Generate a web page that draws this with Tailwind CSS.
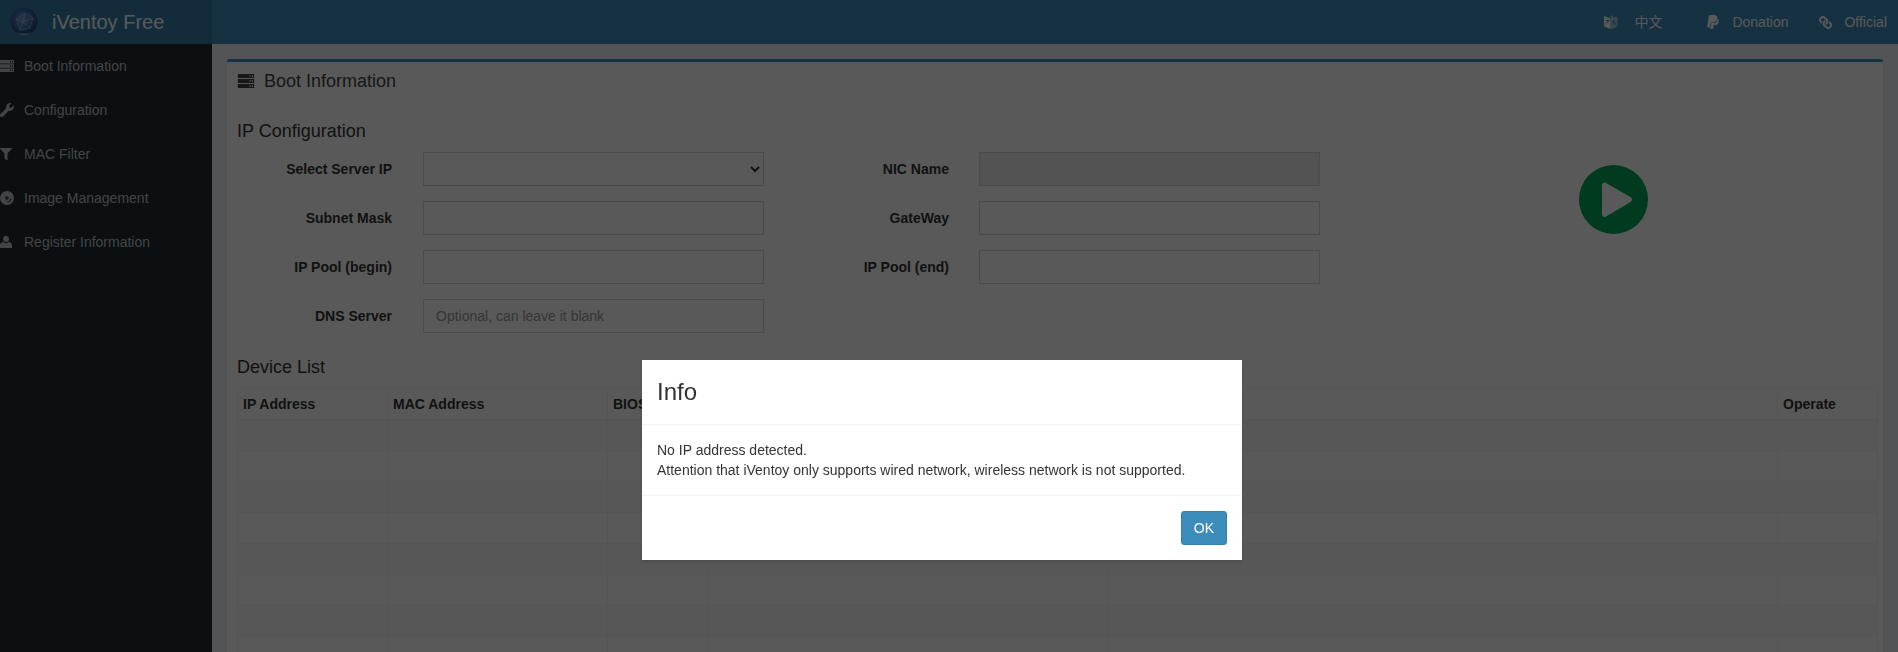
<!DOCTYPE html>
<html lang="en">
<head>
  <meta charset="UTF-8" />
  <title>iVentoy Free</title>
  <script src="https://cdn.jsdelivr.net/npm/@tailwindcss/browser@4"></script>
</head>
<body class="h-screen overflow-hidden bg-[#ecf0f5] text-[14px] leading-[20px] text-[#333] font-['Liberation_Sans',Arial,sans-serif]">

<!-- Header -->
<header class="flex h-[44px] bg-[#3c8dbc] text-white">
  <a class="flex w-[212px] items-center bg-[#367fa9] pl-[10px]">
    <svg width="28" height="30" viewBox="0 0 28 30">
      <defs>
        <radialGradient id="globe" cx="0.45" cy="0.42" r="0.6">
          <stop offset="0" stop-color="#6f9fd8" />
          <stop offset="0.65" stop-color="#34609f" />
          <stop offset="1" stop-color="#1d3a70" />
        </radialGradient>
      </defs>
      <circle cx="14" cy="14.500" r="13.500" fill="url(#globe)" />
      <path d="M6 12 15 6 23 11 20 21 10 23ZM15 6 13 15 20 21M6 12 13 15 10 23M23 11 13 15" fill="none" stroke="#b4c6e4" stroke-width="0.5" />
      <path d="M6 25C10 29 18 29 22 25 18 27 10 27 6 25Z" fill="#dbe4f0" opacity="0.7" />
    </svg>
    <span class="ml-[14px] text-[20px]">iVentoy Free</span>
  </a>
  <nav class="ml-auto flex items-center pr-[11px]">
    <a class="flex items-center">
      <svg width="14" height="14" viewBox="0 0 14 14" fill="currentColor"><path d="M0 1 6.500 3.500V14L0 11.500Z" /><path d="M6.500 1.500 9 0V2.500L13.500 1.500V12L7 14V3.500Z" fill-opacity="0.55" /><path d="M1.500 8C3.500 7.500 4.500 6.500 5 5M2 5.500H5.500M8.500 10 10 5.500 11.500 10" fill="none" stroke="#3c8dbc" stroke-width="1" /></svg>
      <span class="ml-[16px] font-['Liberation_Sans','Noto_Sans_CJK_SC',sans-serif]">中文</span>
    </a>
    <a class="ml-[45px] flex items-center">
      <svg width="12" height="14" viewBox="0 28 384 456" fill="currentColor"><path d="M111.4 295.9c-3.5 19.2-17.4 108.7-21.5 134-.3 1.8-1 2.5-3 2.5H12.3c-7.6 0-13.1-6.6-12.1-13.9L58.8 46.6c1.5-9.6 10.1-16.9 20-16.9 152.3 0 165.1-3.7 204 11.4 60.1 23.3 65.6 79.5 44 140.3-21.5 62.6-72.5 89.5-140.1 90.3-43.4.7-69.5-7-75.3 24.2zM357.1 152c-1.8-1.3-2.5-1.8-3 1.3-2 11.4-5.1 22.5-8.8 33.6-39.9 113.8-150.5 103.9-204.5 103.9-6.1 0-10.1 3.3-10.9 9.4-22.6 140.4-27.1 169.7-27.1 169.7-1 7.1 3.5 12.9 10.6 12.9h63.5c8.6 0 15.7-6.3 17.4-14.9.7-5.4-1.1 6.1 14.4-91.3 4.6-22 14.3-19.7 29.3-19.7 71 0 126.4-28.8 142.9-112.3 6.5-34.8 4.6-71.4-23.8-92.6z" /></svg>
      <span class="ml-[13px]">Donation</span>
    </a>
    <a class="ml-[30px] flex items-center">
      <svg width="13" height="13" viewBox="0 0 512 512" fill="currentColor" class="translate-x-[1px] -scale-x-100"><path d="M326.612 185.391c59.747 59.809 58.927 155.698.36 214.59-.11.12-.24.25-.36.37l-67.2 67.2c-59.27 59.27-155.699 59.262-214.96 0-59.27-59.26-59.27-155.7 0-214.96l37.106-37.106c9.84-9.84 26.786-3.3 27.294 10.606.648 17.722 3.826 35.527 9.69 52.721 1.986 5.822.567 12.262-3.783 16.612l-13.087 13.087c-28.026 28.026-28.905 73.66-1.155 101.96 28.024 28.579 74.086 28.749 102.325.51l67.2-67.19c28.191-28.191 28.073-73.757 0-101.83-3.701-3.694-7.429-6.564-10.341-8.569a16.037 16.037 0 0 1-6.947-12.606c-.396-10.567 3.348-21.456 11.698-29.806l21.054-21.055c5.521-5.521 14.182-6.199 20.584-1.731a152.482 152.482 0 0 1 20.522 17.197zM467.547 44.449c-59.261-59.262-155.69-59.27-214.96 0l-67.2 67.2c-.12.12-.25.25-.36.37-58.566 58.892-59.387 154.781.36 214.59a152.454 152.454 0 0 0 20.521 17.196c6.402 4.468 15.064 3.789 20.584-1.731l21.054-21.055c8.35-8.35 12.094-19.239 11.698-29.806a16.037 16.037 0 0 0-6.947-12.606c-2.912-2.005-6.64-4.875-10.341-8.569-28.073-28.073-28.191-73.639 0-101.83l67.2-67.19c28.239-28.239 74.3-28.069 102.325.51 27.75 28.3 26.872 73.934-1.155 101.96l-13.087 13.087c-4.35 4.35-5.769 10.79-3.783 16.612 5.864 17.194 9.042 34.999 9.69 52.721.509 13.906 17.454 20.446 27.294 10.606l37.106-37.106c59.271-59.259 59.271-155.699.001-214.959z" /></svg>
      <span class="ml-[13px]">Official</span>
    </a>
  </nav>
</header>

<div class="flex h-[608px]">
  <!-- Sidebar -->
  <aside class="w-[212px] shrink-0 bg-[#222d32] text-[#b8c7ce]">
    <ul>
      <li class="flex h-[44px] items-center">
        <svg width="14" height="12" viewBox="0 0 14 12" fill="currentColor" class="mr-[10px]"><path fill-rule="evenodd" d="M0 0H14V3.400H0ZM10 1V2.400H11V1ZM12 1V2.400H13V1ZM0 4.300H14V7.700H0ZM10 5.300V6.700H11V5.300ZM12 5.300V6.700H13V5.300ZM0 8.600H14V12H0ZM10 9.600V11H11V9.600ZM12 9.600V11H13V9.600Z" /></svg>
        Boot Information
      </li>
      <li class="flex h-[44px] items-center">
        <svg width="14" height="14" viewBox="0 0 512 512" fill="currentColor" class="mr-[10px]"><path d="M507.73 109.1c-2.24-9.03-13.54-12.09-20.12-5.51l-74.36 74.36-67.88-11.31-11.31-67.88 74.36-74.36c6.62-6.62 3.43-17.9-5.66-20.16-47.38-11.74-99.55.91-136.58 37.93-39.64 39.64-50.55 97.1-34.05 147.2L18.74 402.76c-24.99 24.99-24.99 65.51 0 90.5 24.99 24.99 65.51 24.99 90.5 0l213.21-213.21c50.12 16.71 107.47 5.68 147.37-34.22 37.07-37.07 49.7-89.32 37.91-136.73z" /></svg>
        Configuration
      </li>
      <li class="flex h-[44px] items-center">
        <svg width="12" height="12" viewBox="0 0 512 512" fill="currentColor" class="mr-[12px]"><path d="M487.976 0H24.028C2.71 0-8.047 25.866 7.058 40.971L192 225.941V432c0 7.831 3.821 15.17 10.237 19.662l80 55.98C298.02 518.69 320 507.493 320 487.98V225.941l184.947-184.97C520.021 25.896 509.338 0 487.976 0z" /></svg>
        MAC Filter
      </li>
      <li class="flex h-[44px] items-center">
        <svg width="14" height="14" viewBox="0 0 14 14" fill="currentColor" class="mr-[10px]"><path fill-rule="evenodd" d="M7 0a7 7 0 1 0 0 14A7 7 0 0 0 7 0ZM7 5.200a1.800 1.800 0 1 1 0 3.600 1.800 1.800 0 0 1 0-3.600ZM7 6.400a.6.6 0 1 0 0 1.200.6.6 0 0 0 0-1.200ZM11.500 7.500C11.300 9.500 9.500 11.300 7.500 11.500V10.600C9 10.400 10.400 9 10.600 7.500Z" /></svg>
        Image Management
      </li>
      <li class="flex h-[44px] items-center">
        <svg width="12" height="12" viewBox="0 0 12 12" fill="currentColor" class="mr-[12px]"><circle cx="6" cy="3" r="3" /><path d="M0 12V9.500C0 7.500 1.500 6.300 3.200 6.100 4 6.800 5 7.200 6 7.200S8 6.800 8.800 6.100C10.500 6.300 12 7.500 12 9.500V12Z" /></svg>
        Register Information
      </li>
    </ul>
  </aside>

  <!-- Content -->
  <main class="min-w-0 flex-1 overflow-hidden p-[15px]">
    <section class="h-[700px] rounded-[3px] border-t-[3px] border-[#3c8dbc] bg-white shadow-[0_1px_1px_rgba(0,0,0,0.1)]">
      <div class="flex h-[38px] items-center pl-[10px] text-[#444]">
        <svg width="18" height="14" viewBox="0 0 14 12" fill="currentColor" class="mr-[9px]"><path fill-rule="evenodd" d="M0 0H14V3.400H0ZM10 1V2.400H11V1ZM12 1V2.400H13V1ZM0 4.300H14V7.700H0ZM10 5.300V6.700H11V5.300ZM12 5.300V6.700H13V5.300ZM0 8.600H14V12H0ZM10 9.600V11H11V9.600ZM12 9.600V11H13V9.600Z" /></svg>
        <h3 class="text-[18px]">Boot Information</h3>
      </div>

      <div class="px-[10px]">
        <h4 class="mt-[21px] h-[20px] text-[18px] leading-[20px]">IP Configuration</h4>
        <div class="mt-[11px] flex">
          <div class="grid grid-cols-[155px_341px_185px_341px] gap-y-[15px] items-center">
            <label class="text-right font-bold">Select Server IP</label>
            <select class="ml-[31px] h-[34px] w-[341px] border border-[#d2d6de] bg-white"></select>
            <label class="ml-[31px] w-[185px] text-right font-bold">NIC Name</label>
            <input disabled class="ml-[61px] h-[34px] w-[341px] border border-[#d2d6de] bg-[#eeeeee]" />

            <label class="text-right font-bold">Subnet Mask</label>
            <input class="ml-[31px] h-[34px] w-[341px] border border-[#d2d6de] bg-white" />
            <label class="ml-[31px] w-[185px] text-right font-bold">GateWay</label>
            <input class="ml-[61px] h-[34px] w-[341px] border border-[#d2d6de] bg-white" />

            <label class="text-right font-bold">IP Pool (begin)</label>
            <input class="ml-[31px] h-[34px] w-[341px] border border-[#d2d6de] bg-white" />
            <label class="ml-[31px] w-[185px] text-right font-bold">IP Pool (end)</label>
            <input class="ml-[61px] h-[34px] w-[341px] border border-[#d2d6de] bg-white" />

            <label class="text-right font-bold">DNS Server</label>
            <input placeholder="Optional, can leave it blank" class="ml-[31px] h-[34px] w-[341px] border border-[#d2d6de] bg-white px-[12px] placeholder:text-[#999]" />
          </div>
          <svg width="69" height="69" viewBox="0 0 69 69" class="ml-[320px] mt-[13px] shrink-0">
            <circle cx="34.500" cy="34.500" r="34.500" fill="#00a65a" />
            <path d="M27 18 51.500 32C53.500 33.500 53.500 35.500 51.500 37L27 51.500C25 52.500 23 51.500 23 49V20.500C23 18 25 17 27 18Z" fill="#ffffff" />
          </svg>
        </div>

        <h4 class="mt-[24px] h-[20px] text-[18px] leading-[20px]">Device List</h4>
        <table class="mt-[11px] w-[1640px] table-fixed border-collapse border border-[#f4f4f4]">
          <colgroup>
            <col class="w-[150px]" /><col class="w-[220px]" /><col class="w-[100px]" /><col class="w-[400px]" /><col class="w-[670px]" /><col class="w-[100px]" />
          </colgroup>
          <thead>
            <tr class="h-[31px] border-b-2 border-[#f4f4f4] text-left">
              <th class="border border-[#f4f4f4] px-[5px]">IP Address</th>
              <th class="border border-[#f4f4f4] px-[5px]">MAC Address</th>
              <th class="border border-[#f4f4f4] px-[5px]">BIOS</th>
              <th class="border border-[#f4f4f4] px-[5px]"></th>
              <th class="border border-[#f4f4f4] px-[5px]"></th>
              <th class="border border-[#f4f4f4] px-[5px]">Operate</th>
            </tr>
          </thead>
          <tbody class="[&>tr]:h-[31px] [&>tr:nth-child(odd)]:bg-[#f9f9f9] [&_td]:border [&_td]:border-[#f4f4f4]">
            <tr><td></td><td></td><td></td><td></td><td></td><td></td></tr>
            <tr><td></td><td></td><td></td><td></td><td></td><td></td></tr>
            <tr><td></td><td></td><td></td><td></td><td></td><td></td></tr>
            <tr><td></td><td></td><td></td><td></td><td></td><td></td></tr>
            <tr><td></td><td></td><td></td><td></td><td></td><td></td></tr>
            <tr><td></td><td></td><td></td><td></td><td></td><td></td></tr>
            <tr><td></td><td></td><td></td><td></td><td></td><td></td></tr>
            <tr><td></td><td></td><td></td><td></td><td></td><td></td></tr>
          </tbody>
        </table>
      </div>
    </section>
  </main>
</div>

<!-- Modal -->
<div class="fixed inset-0 bg-black/65"></div>
<div class="fixed left-[642px] top-[360px] w-[600px] bg-white shadow-[0_2px_3px_rgba(0,0,0,0.125)]">
  <div class="border-b border-[#f4f4f4] p-[15px]">
    <h4 class="text-[24px] leading-[34px]">Info</h4>
  </div>
  <div class="p-[15px]">
    No IP address detected.<br />
    Attention that iVentoy only supports wired network, wireless network is not supported.
  </div>
  <div class="flex justify-end border-t border-[#f4f4f4] p-[15px]">
    <button class="h-[34px] rounded-[3px] border border-[#367fa9] bg-[#3c8dbc] px-[12px] text-white">OK</button>
  </div>
</div>

</body>
</html>
